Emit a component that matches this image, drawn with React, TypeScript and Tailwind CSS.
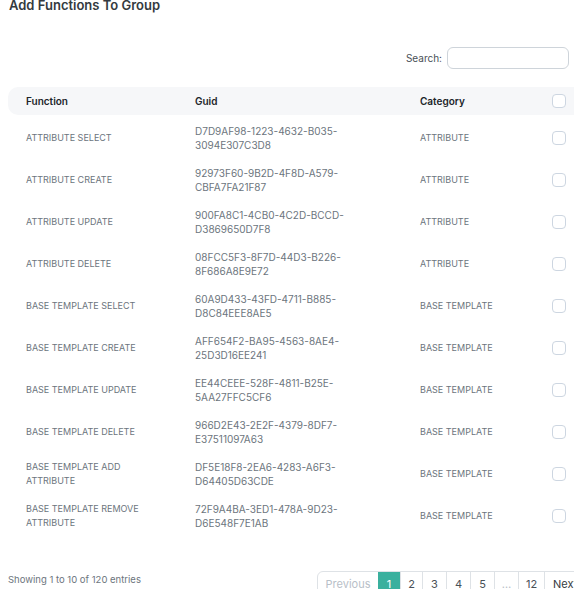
import React from "react";

type Row = { fn: string[]; guid: [string, string]; cat: string };

const rows: Row[] = [
  { fn: ["ATTRIBUTE SELECT"], guid: ["D7D9AF98-1223-4632-B035-", "3094E307C3D8"], cat: "ATTRIBUTE" },
  { fn: ["ATTRIBUTE CREATE"], guid: ["92973F60-9B2D-4F8D-A579-", "CBFA7FA21F87"], cat: "ATTRIBUTE" },
  { fn: ["ATTRIBUTE UPDATE"], guid: ["900FA8C1-4CB0-4C2D-BCCD-", "D3869650D7F8"], cat: "ATTRIBUTE" },
  { fn: ["ATTRIBUTE DELETE"], guid: ["08FCC5F3-8F7D-44D3-B226-", "8F686A8E9E72"], cat: "ATTRIBUTE" },
  { fn: ["BASE TEMPLATE SELECT"], guid: ["60A9D433-43FD-4711-B885-", "D8C84EEE8AE5"], cat: "BASE TEMPLATE" },
  { fn: ["BASE TEMPLATE CREATE"], guid: ["AFF654F2-BA95-4563-8AE4-", "25D3D16EE241"], cat: "BASE TEMPLATE" },
  { fn: ["BASE TEMPLATE UPDATE"], guid: ["EE44CEEE-528F-4811-B25E-", "5AA27FFC5CF6"], cat: "BASE TEMPLATE" },
  { fn: ["BASE TEMPLATE DELETE"], guid: ["966D2E43-2E2F-4379-8DF7-", "E37511097A63"], cat: "BASE TEMPLATE" },
  { fn: ["BASE TEMPLATE ADD", "ATTRIBUTE"], guid: ["DF5E18F8-2EA6-4283-A6F3-", "D64405D63CDE"], cat: "BASE TEMPLATE" },
  { fn: ["BASE TEMPLATE REMOVE", "ATTRIBUTE"], guid: ["72F9A4BA-3ED1-478A-9D23-", "D6E548F7E1AB"], cat: "BASE TEMPLATE" },
];

const pages = [
  { label: "1", w: "w-[22px]", active: true },
  { label: "2", w: "w-[22px]" },
  { label: "3", w: "w-[24px]" },
  { label: "4", w: "w-[24px]" },
  { label: "5", w: "w-[24px]" },
  { label: "…", w: "w-[24px]", muted: true },
  { label: "12", w: "w-[26px]" },
];

function Check() {
  return <span className="block h-[14px] w-[14px] rounded-[4px] border border-[#cdd6e1] bg-white" />;
}

export default function App() {
  return (
    <div className="h-[589px] w-[574px] overflow-hidden bg-white font-['Inter',sans-serif]">
      <div className="w-[620px] pl-[8px]">
        <h1 className="-mt-[4px] pl-[1px] text-[13px] font-semibold leading-[18px] text-[#343a40]">
          Add Functions To Group
        </h1>

        <div className="mt-[33px] flex w-[566px] items-center justify-end gap-[5px] pr-[5px]">
          <span className="text-[10px] text-[#495057]">Search:</span>
          <input className="h-[22px] w-[122px] rounded-[6px] border border-[#ced4da] bg-white outline-none" />
        </div>

        <div className="mt-[18px]">
          <div className="grid h-[28px] grid-cols-[169px_225px_132px_14px] items-center rounded-l-[10px] bg-[#f6f7f9] pl-[18px] text-[10px] font-semibold text-[#212529]">
            <span>Function</span>
            <span>Guid</span>
            <span>Category</span>
            <Check />
          </div>
          {rows.map((r) => (
            <div
              key={r.guid[0]}
              className="grid h-[42px] grid-cols-[169px_225px_132px_14px] items-center pl-[18px] pt-[4px] text-[9px] leading-[14px] text-[#6c757d]"
            >
              <div>
                {r.fn.map((l) => (
                  <div key={l}>{l}</div>
                ))}
              </div>
              <div className="text-[10px]">
                <div>{r.guid[0]}</div>
                <div>{r.guid[1]}</div>
              </div>
              <span>{r.cat}</span>
              <Check />
            </div>
          ))}
        </div>

        <div className="mt-[36px] flex items-start">
          <span className="mt-[2px] w-[309px] text-[9.5px] text-[#6c757d]">Showing 1 to 10 of 120 entries</span>
          <div className="flex h-[30px] rounded-tl-[6px] border border-[#dee2e6] text-[11px] leading-[24px] text-[#495057]">
            <span className="w-[60px] text-center text-[#b8c0c8]">Previous</span>
            {pages.map((p) => (
              <span
                key={p.label}
                className={
                  p.active
                    ? `${p.w} bg-[#3ab09e] text-center text-white`
                    : `${p.w} border-l border-[#dee2e6] text-center ${p.muted ? "text-[#b8c0c8]" : ""}`
                }
              >
                {p.label}
              </span>
            ))}
            <span className="w-[40px] border-l border-[#dee2e6] pl-[8px] text-[#343a40]">Next</span>
          </div>
        </div>
      </div>
    </div>
  );
}
